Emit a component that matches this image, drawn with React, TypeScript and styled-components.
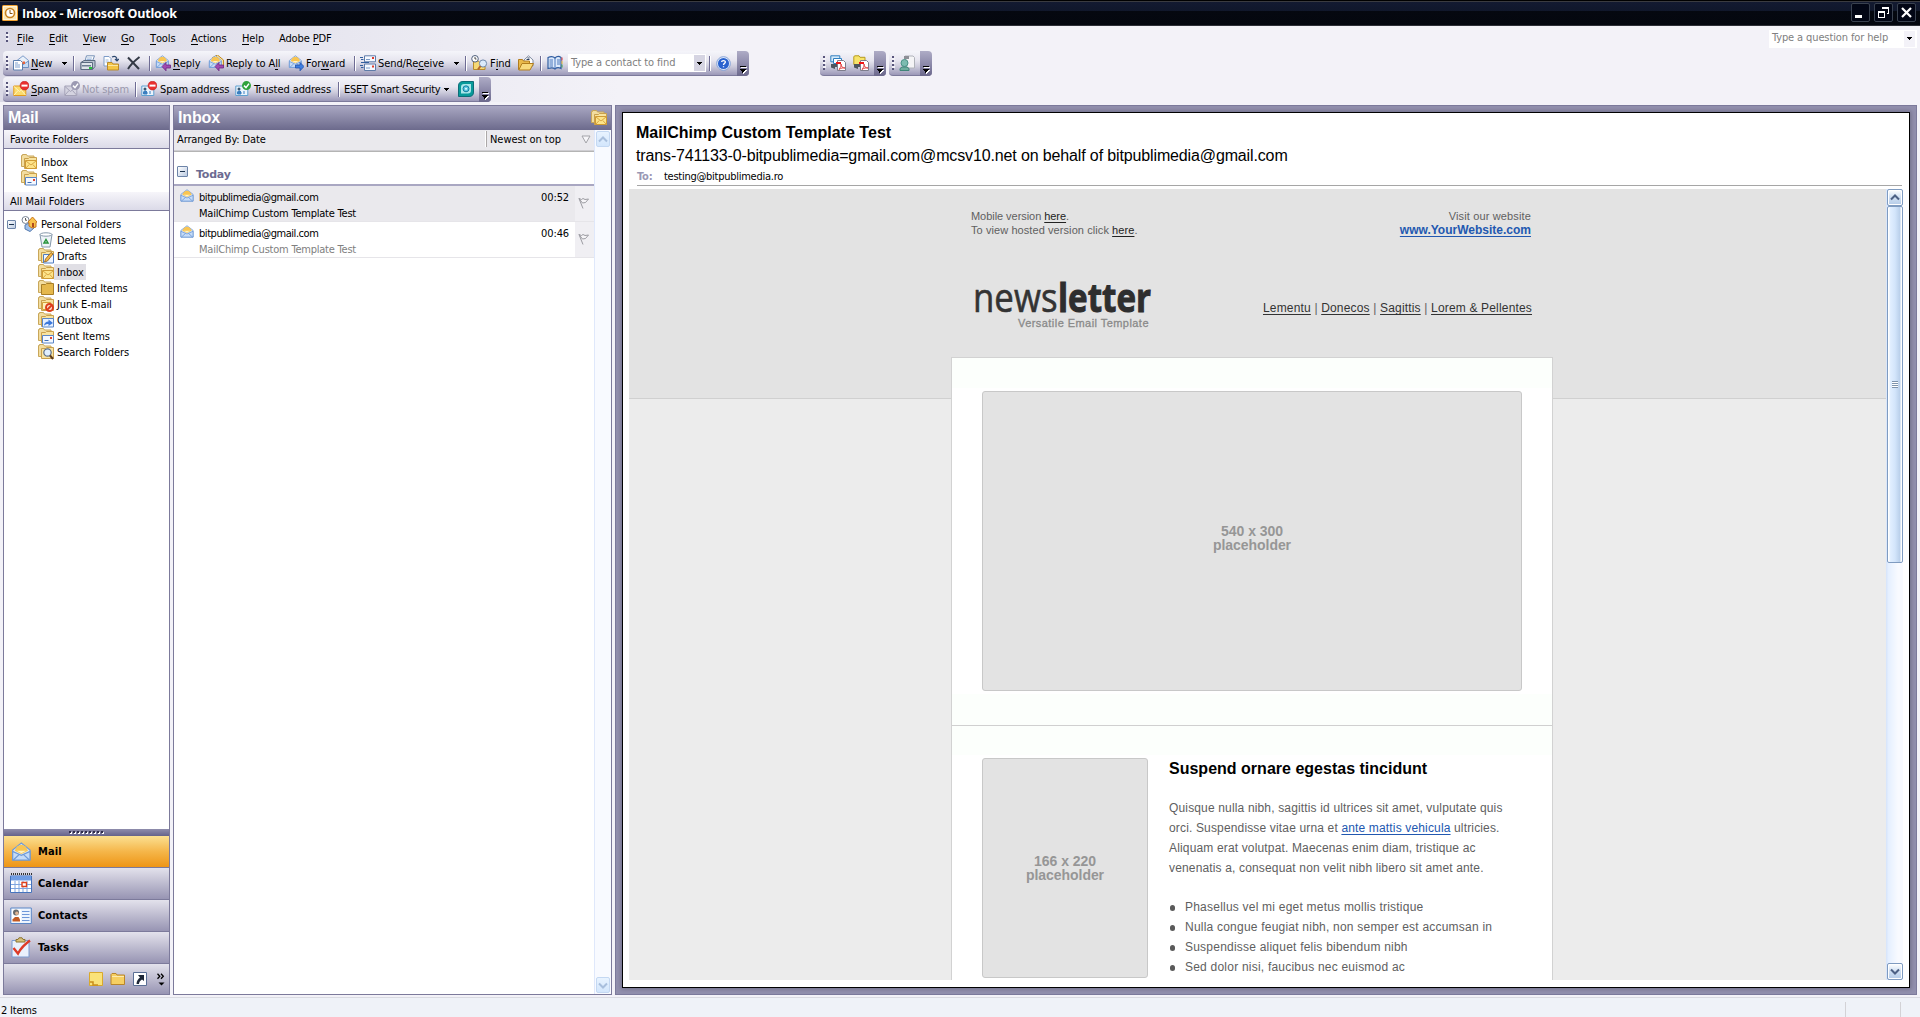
import React from 'react';
import styled, { createGlobalStyle, css } from 'styled-components';

const ui = '"DejaVu Sans Condensed", "DejaVu Sans", Tahoma, sans-serif';
const arial = '"Liberation Sans", Arial, sans-serif';
const edge = '#7c7a9b';

const Global = createGlobalStyle`
  *, *::before, *::after { box-sizing: border-box; }
  body { margin: 0; background: #f3f2f8; }
  svg { display: block; flex: none; }
  u { text-decoration: none; box-shadow: 0 1px 0 currentColor; display: inline-block; line-height: 11px; }
`;

const Window = styled.div`
  width: 1920px;
  height: 1017px;
  overflow: hidden;
  display: flex;
  flex-direction: column;
  background: #f3f2f8;
  font: 11px/14px ${ui};
  letter-spacing: -0.12px;
  color: #000;
  white-space: nowrap;
`;

/* ---------- title bar ---------- */

const TitleBar = styled.header`
  height: 26px;
  flex: none;
  display: flex;
  align-items: center;
  padding: 0 4px 0 2px;
  border-bottom: 1px solid #2e3038;
  background: linear-gradient(#000 0 1px, #3a3b40 1px 2px, #131a31 2px, #10172b 11px, #050810 11px, #04070f 100%);
`;

const Title = styled.h1`
  flex: 1;
  margin: 0 0 0 4px;
  padding-top: 2px;
  font: bold 12.5px/16px "Open Sans", sans-serif;
  letter-spacing: -0.18px;
  color: #fff;
`;

const WindowButtons = styled.div`
  display: flex;
  gap: 4px;
`;

const WindowButton = styled.button`
  width: 19px;
  height: 19px;
  padding: 0;
  display: grid;
  place-items: center;
  border: 1px solid #39414f;
  border-radius: 2px;
  background: #020615;
`;

/* ---------- menu ---------- */

const MenuBar = styled.nav`
  height: 24px;
  flex: none;
  display: flex;
  align-items: center;
  padding: 0 3px 0 6px;
  background: linear-gradient(90deg, #dad9e6, #f3f2f8 620px);
`;

const MenuItem = styled.span<{ $w: number; $gap?: number }>`
  width: ${p => p.$w}px;
  padding-top: 2px;
  margin-left: ${p => p.$gap ?? 16}px;
`;

const Grip = styled.i<{ $rows?: number }>`
  width: 3px;
  height: ${p => (p.$rows ?? 4) * 4 - 2}px;
  flex: none;
  background:
    repeating-linear-gradient(transparent 0 2px, #f3f2f8 2px 4px),
    linear-gradient(90deg, #56547a 2px, transparent 2px);
  ${p => p.$rows === 3 && css`margin-top: -2px;`}
`;

const HelpBox = styled.div`
  margin: 1px 0 0 auto;
  width: 148px;
  height: 18px;
  padding: 0 2px 0 3px;
  display: flex;
  align-items: center;
  justify-content: space-between;
  background: #fff;
  color: #808080;
  > span:first-child { padding-bottom: 2px; }
`;

const DropButton = styled.span<{ $tone?: string; $h?: number }>`
  width: 11px;
  height: ${p => p.$h ?? 16}px;
  display: grid;
  place-items: center;
  background: ${p => p.$tone ?? '#f3f2f8'};
`;

/* ---------- toolbars ---------- */

const ToolRow = styled.div`
  height: 26px;
  flex: none;
  display: flex;
  padding: 1px 0 0 3px;
  background: linear-gradient(90deg, #dad9e6, #f3f2f8 620px);
`;

const Toolbar = styled.div<{ $w: number; $gap?: number }>`
  width: ${p => p.$w}px;
  height: 25px;
  margin-left: ${p => p.$gap ?? 0}px;
  display: flex;
  align-items: center;
  padding-left: 3px;
  border-radius: 4px;
  border-bottom: 1px solid ${edge};
  background: linear-gradient(#f5f5fa, #e6e5ef 40%, #cbcadb 65%, #9b98b8);
`;

const Tool = styled.span<{ $gap?: number; $w?: number; $ls?: number; $off?: boolean }>`
  width: ${p => (p.$w ? p.$w + 'px' : 'auto')};
  margin-left: ${p => p.$gap ?? 0}px;
  padding-top: ${p => (p.$w ? 2 : 0)}px;
  letter-spacing: ${p => p.$ls ?? -0.08}px;
  color: ${p => (p.$off ? '#9a98ac' : '#000')};
  flex: none;
`;

const Divider = styled.i<{ $gap?: number }>`
  width: 2px;
  height: 15px;
  flex: none;
  margin-left: ${p => p.$gap ?? 0}px;
  background: linear-gradient(90deg, #6e6c94 1px, #fff 1px);
`;

const ContactBox = styled.div`
  width: 138px;
  height: 18px;
  margin-left: 5px;
  padding: 0 1px 0 3px;
  display: flex;
  align-items: center;
  justify-content: space-between;
  background: #fff;
  color: #808080;
`;

const OverflowCap = styled.span`
  width: 12px;
  height: 25px;
  margin: 0 0 -1px auto;
  display: flex;
  align-items: flex-end;
  justify-content: center;
  padding-bottom: 2px;
  border-radius: 0 4px 4px 0;
  background: linear-gradient(#aeacc6, #8e8bab 50%, #6b688c);
`;

/* ---------- panes ---------- */

const Workspace = styled.main`
  flex: 1;
  min-height: 0;
  display: flex;
  gap: 3px;
  padding: 3px 3px 0;
`;

const Pane = styled.section<{ $w: number }>`
  width: ${p => p.$w}px;
  flex: none;
  display: flex;
  flex-direction: column;
  border: 1px solid ${edge};
  background: #fff;
`;

const PaneHeader = styled.h2`
  height: 24px;
  flex: none;
  margin: 0;
  padding: 0 4px;
  display: flex;
  align-items: center;
  justify-content: space-between;
  background: linear-gradient(#a9a7c2, #6c6a8c);
  font: bold 16px/22px ${arial};
  letter-spacing: -0.15px;
  color: #fff;
`;

const FolderHeader = styled.h3`
  height: 19px;
  flex: none;
  margin: 0;
  padding-left: 6px;
  font: inherit;
  letter-spacing: 0;
  line-height: 20px;
  border-bottom: 1px solid ${edge};
  background: linear-gradient(#f6f5fa, #dbdae8);
`;

const FolderList = styled.ul<{ $fill?: boolean }>`
  list-style: none;
  margin: 0;
  padding: ${p => (p.$fill ? '5px 0 0 3px' : '5px 0 6px 17px')};
  flex: ${p => (p.$fill ? 1 : 'none')};
`;

const FolderItem = styled.li<{ $child?: boolean; $on?: boolean }>`
  height: 16px;
  padding-left: ${p => (p.$child ? 31 : 0)}px;
  display: flex;
  align-items: center;
  letter-spacing: -0.05px;
  span {
    height: 16px;
    line-height: 17px;
    margin-left: ${p => (p.$child ? 0 : 1)}px;
    padding: 0 2px 0 3px;
    background: ${p => (p.$on ? '#e0dfe5' : 'none')};
  }
`;

const Expander = styled.i<{ $size?: number; $gap?: number }>`
  width: ${p => p.$size ?? 9}px;
  height: ${p => p.$size ?? 9}px;
  flex: none;
  margin-right: ${p => p.$gap ?? 0}px;
  border: 1px solid #6d84a8;
  border-radius: 1px;
  background:
    linear-gradient(#1d3450, #1d3450) center / 5px 1px no-repeat,
    linear-gradient(135deg, #fff, #bccbe2);
`;

const Splitter = styled.div`
  height: 7px;
  flex: none;
  display: flex;
  justify-content: center;
  align-items: center;
  background: linear-gradient(#8f8dac, #65638a);
`;

const BigButton = styled.button<{ $on?: boolean }>`
  height: 32px;
  flex: none;
  display: flex;
  align-items: center;
  gap: 6px;
  padding: 0 0 0 6px;
  border: 0;
  border-bottom: 1px solid ${edge};
  font: bold 11px/14px ${ui};
  letter-spacing: 0.1px;
  text-align: left;
  color: #000;
  background: ${p => (p.$on ? 'linear-gradient(#fbe091, #f5b64a 50%, #ee9515)' : 'linear-gradient(#e3e2ec, #c1bfd2 45%, #9794b3)')};
`;

const ShortcutBar = styled.div`
  height: 30px;
  flex: none;
  display: flex;
  align-items: center;
  justify-content: flex-end;
  gap: 7px;
  padding-right: 4px;
  background: linear-gradient(#e3e2ec, #c1bfd2 45%, #9794b3);
  svg:last-child { margin-left: 3px; }
`;

/* ---------- message list ---------- */

const ListBody = styled.div`
  flex: 1;
  display: flex;
`;

const Messages = styled.div`
  width: 420px;
`;

const Arrange = styled.div`
  height: 22px;
  display: flex;
  align-items: center;
  padding: 0 2px 3px 3px;
  border-bottom: 1px solid #b4b4b4;
  box-shadow: inset 0 -1px 0 #cfced2;
  background: #eae9ed;
  span { padding-top: 2px; }
  em {
    width: 87px;
    margin-left: auto;
    padding-left: 3px;
    line-height: 17px;
    height: 16px;
    font-style: normal;
    border-left: 1px solid #aca8a8;
    box-shadow: -1px 0 0 #fff;
    letter-spacing: -0.05px;
  }
`;

const GroupHeader = styled.div`
  height: 34px;
  display: flex;
  align-items: flex-end;
  padding: 0 0 2px 3px;
  border-bottom: 2px solid #a9a7c2;
  font: bold 11px/14px "DejaVu Sans", sans-serif;
  letter-spacing: -0.2px;
  color: #6c6a92;
  i { margin-bottom: 5px; }
  span { margin-left: 8px; }
`;

const Message = styled.article<{ $on?: boolean }>`
  height: 36px;
  display: flex;
  border-bottom: 1px solid #e6e5e9;
  background: ${p => (p.$on ? '#eae9ed' : '#fff')};
`;

const MessageText = styled.div<{ $muted?: boolean }>`
  flex: 1;
  display: grid;
  grid-template-columns: 341px 1fr;
  grid-template-rows: 16px 16px;
  padding: 3px 0 0 6px;
  line-height: 17px;
  margin-right: 6px;
  p { margin: 0; }
  p:first-of-type { letter-spacing: -0.45px; }
  p:last-of-type { grid-row: 2; letter-spacing: -0.22px; color: ${p => (p.$muted ? '#808080' : '#000')}; }
  time { text-align: right; }
`;

const MessageIcon = styled.div`
  width: 19px;
  padding: 3px 0 0 6px;
`;

const FlagCell = styled.div`
  width: 19px;
  padding: 11px 0 0 3px;
  background: #f0eff3;
`;

const PaleScroll = styled.div`
  flex: 1;
  display: flex;
  flex-direction: column;
  justify-content: space-between;
  align-items: center;
  padding: 1px 0 1px;
  border-left: 1px solid #dfe8fb;
  background: #f8faff;
`;

const PaleArrow = styled.span`
  width: 14px;
  height: 16px;
  display: grid;
  place-items: center;
  border: 1px solid #c4d8f2;
  border-radius: 2px;
  background: linear-gradient(#e8f3ff, #d3e6fc);
`;

/* ---------- reading pane ---------- */

const ReadingFrame = styled.section`
  flex: 1;
  display: flex;
  padding: 6px;
  border: 1px solid ${edge};
  background: #918fad;
`;

const Reading = styled.div`
  flex: 1;
  min-width: 0;
  display: flex;
  flex-direction: column;
  border: 1px solid #000;
  background: #fff;
  padding: 0 6px 7px;
  box-shadow: 0 0 4px 1px #706e88;
`;

const MailHead = styled.header`
  height: 76px;
  flex: none;
  padding: 11px 1px 0 7px;
  font-family: ${arial};
  h3 { margin: 0; font: bold 16px/18px ${arial}; letter-spacing: 0.02px; }
  p { margin: 5px 0 0; font: 16px/18px ${arial}; letter-spacing: -0.135px; }
`;

const ToLine = styled.div`
  margin: 6px 0 0 1px;
  height: 15px;
  border-bottom: 1px solid #a6a6a6;
  font: 11px/11px ${ui};
  letter-spacing: -0.264px;
  b { display: inline-block; width: 27px; color: #9a98b5; font: bold 11px/11px ${ui}; letter-spacing: -0.2px; }
`;

const MailBody = styled.div`
  flex: 1;
  min-height: 0;
  display: flex;
`;

const MailCanvas = styled.div`
  width: 1257px;
  overflow: hidden;
  background: linear-gradient(#e3e3e3 209px, #d0d0d0 209px 210px, #ececec 210px);
  font: 12px/20px ${arial};
  color: #606060;
`;

const MailColumn = styled.div`
  width: 602px;
  margin-left: 322px;
`;

const TopLinks = styled.div`
  height: 91px;
  padding: 20px 22px 0 20px;
  display: flex;
  justify-content: space-between;
  font: 11px/14px ${arial};
  letter-spacing: 0.08px;
  div:last-child { text-align: right; letter-spacing: 0.14px; }
  a { color: #222; text-decoration: underline; text-underline-offset: 2px; }
  a.site { font: bold 12px/14px ${arial}; letter-spacing: 0; color: #2258b0; }
`;

const Tight = styled.span`
  letter-spacing: -0.05px;
`;

const Brand = styled.div`
  height: 77px;
  padding: 0 21px 0 22px;
  display: flex;
  justify-content: space-between;
  nav { padding-top: 18px; letter-spacing: 0.17px; }
  nav a { color: #333; text-decoration: underline; text-underline-offset: 2px; }
`;

const Card = styled.div`
  border: 1px solid #d2d2d2;
  border-bottom: 0;
  background: #fff;
  height: 700px;
`;

const Hero = styled.div`
  height: 368px;
  padding: 33px 30px 0;
  border-bottom: 1px solid #d0d0d0;
  background: linear-gradient(#fcfffc 30px, #fff 30px 336px, #fcfffc 336px);
`;

const Feature = styled.div`
  display: flex;
  padding: 32px 30px 0;
  background: linear-gradient(#fcfffc 29px, #fff 29px);
`;

const Placeholder = styled.div<{ $w: number; $h: number; $lift?: number }>`
  width: ${p => p.$w}px;
  height: ${p => p.$h}px;
  flex: none;
  display: grid;
  place-content: center;
  padding-bottom: ${p => p.$lift ?? 0}px;
  border: 1px solid #c8c8c8;
  border-radius: 3px;
  background: #e3e3e3;
  font: bold 14px/14px ${arial};
  letter-spacing: -0.05px;
  text-align: center;
  color: #969696;
`;

const Article = styled.div`
  margin-left: 21px;
  letter-spacing: 0.155px;
  h4 { margin: 1px 0 19px; font: bold 16px/20px ${arial}; letter-spacing: 0.01px; color: #000; }
  p { margin: 0 0 19px; }
  a { color: #2258b0; text-decoration: underline; text-underline-offset: 2px; }
  ul { list-style: none; margin: 0; padding: 0; letter-spacing: 0.22px; }
  li { display: flex; align-items: center; height: 20px; }
  li::before { content: ''; width: 5px; height: 6px; margin: 1px 10px 0 1px; border-radius: 3px; background: #5a5a5a; }
`;

const Scroll = styled.div`
  width: 17px;
  display: flex;
  flex-direction: column;
  padding-left: 1px;
  background: linear-gradient(90deg, #d9e6fb 1px, #e4efff 2px, #f8faff 12px);
`;

const ScrollArrow = styled.span<{ $end?: boolean }>`
  width: 16px;
  height: 17px;
  flex: none;
  margin-top: ${p => (p.$end ? 'auto' : '0')};
  display: grid;
  place-items: center;
  border: 1px solid #7f9bc0;
  border-radius: 2px;
  background: linear-gradient(#fff, #d3e2f4 45%, #b4cbe8);
  box-shadow: inset 0 0 0 1px #fff;
`;

const Thumb = styled.span`
  width: 16px;
  height: 357px;
  flex: none;
  display: grid;
  place-items: center;
  border: 1px solid #7f9bc0;
  border-radius: 2px;
  background: linear-gradient(90deg, #fff 1px, #e2efff 2px, #d3e5fb 7px, #b9cfea 12px, #fff 13px);
  &::before {
    content: '';
    width: 6px;
    height: 7px;
    margin-top: -1px;
    background: repeating-linear-gradient(#7d93ad 0 1px, #fff 1px 2px);
  }
`;

const StatusBar = styled.footer`
  height: 22px;
  flex: none;
  display: flex;
  align-items: stretch;
  padding: 5px 0 0 1px;
  background: linear-gradient(#f3f2f8 2px, #dadbe2 2px 3px, #eff2f8 3px);
  letter-spacing: -0.2px;
  line-height: 22px;
  span { margin-bottom: -4px; }
  i { width: 1px; margin: 2px 0 0; background: #d3d2d6; }
  i:first-of-type { margin-left: auto; }
  i:last-of-type { margin: 2px 19px 0 54px; }
`;

/* ---------- icons ---------- */

const Caret = ({ w = 5 }: { w?: number }) => (
  <svg width={w} height="3" viewBox="0 0 5 3" shapeRendering="crispEdges"><path d="M0 0h5v1H4v1H3v1H2V2H1V1H0z" /></svg>
);

const More = () => (
  <svg width="7" height="8" viewBox="0 0 7 8" shapeRendering="crispEdges">
    <path fill="#fff" d="M1 1h6v1H1zM2 4h5v1H6v1H5v1H4v1H3z" />
    <path d="M0 0h6v1H0zM0 3h6v1H5v1H4v1H3v1H2V5H1V4H0z" />
  </svg>
);

const SplitterDots = () => (
  <svg width="36" height="3" viewBox="0 0 36 3" shapeRendering="crispEdges">
    {Array.from({ length: 9 }, (_, i) => (
      <React.Fragment key={i}>
        <path d={`M${i * 4 + 1} 1h2v2h-2z`} fill="#fff" />
        <path d={`M${i * 4} 0h2v2h-2z`} fill="#2f2d4a" />
      </React.Fragment>
    ))}
  </svg>
);

type Kids = { children: React.ReactNode; size?: number };
const Glyph = ({ children, size = 16 }: Kids) => <svg width={size} height={size} viewBox="0 0 16 16">{children}</svg>;

const OpenEnvelope = () => (
  <>
    <path d="M1.500 6 8 .8 14.500 6v7.500h-13z" fill="#dbe9fb" stroke="#6f9ad6" strokeWidth=".9" />
    <path d="M3 6.500C4 3.500 6 2 8 2s4 1.500 5 4.500L8 9z" fill="#f9c552" />
    <path d="M4.500 6.500h7L8 8.500z" fill="#fff3c4" />
    <path d="M1.500 7v6.500h13V7L8 10z" fill="#c6dcf8" stroke="#6f9ad6" strokeWidth=".9" />
    <path d="m2 13.500 4.500-4.200M14 13.500 9.500 9.300" stroke="#6f9ad6" strokeWidth=".9" fill="none" />
  </>
);

/* tan folder with a bright front that the per-folder badge sits on */
const Folder = ({ flat }: { flat?: boolean }) => (
  <>
    <path d="M.5 12.500v-11h1v-1h4l1 1.500h6.500v10.500z" fill="#f2dda0" stroke="#c9a75a" />
    <path d="M3.500 14.500v-10h4l1-1h7v11z" fill={flat ? '#e5b84c' : '#f8e3a0'} stroke={flat ? '#a87f28' : '#c9a04c'} />
  </>
);

const BadgeStop = ({ x, y }: { x: number; y: number }) => (
  <>
    <circle cx={x} cy={y} r="4.400" fill="#ea2f2f" stroke="#c01a1a" strokeWidth=".6" />
    <path d={`M${x - 3} ${y - 1}h6v2h-6z`} fill="#fff" />
  </>
);

const BadgeTick = ({ x, y, c }: { x: number; y: number; c: string }) => (
  <>
    <circle cx={x} cy={y} r="4.500" fill={c} />
    <path d={`m${x - 2.5} ${y}l2 2 3-4`} fill="none" stroke="#fff" strokeWidth="1.500" />
  </>
);

const IconApp = () => (
  <Glyph>
    <rect width="16" height="16" rx="1.500" fill="#f0a233" />
    <rect x="1.500" y="1.500" width="13" height="13" fill="#fce6b4" stroke="#fff4d6" />
    <circle cx="8" cy="8" r="4.500" fill="#fff" stroke="#c98322" strokeWidth="1.600" />
    <path d="M8 5v3.500h2.500" fill="none" stroke="#8a5412" />
  </Glyph>
);
const IconNew = () => (
  <Glyph>
    <path d="M4 5.500 10 .8l5.500 4.700V12H4z" fill="#e8f0fa" stroke="#7d9cc8" />
    <path d="M4 6l5.500 4L15.500 6v6.500H4z" fill="#c7dbf5" stroke="#6e90c0" />
    <path d="M.5 5.500h7l2 2v7.500h-9z" fill="#fff" stroke="#5d7fae" />
    <path d="M2 10h5M2 12h5M2 8h3" stroke="#7ea0cf" />
    <path d="M9.500 6.500h2.500v2.500h-2.500z" fill="#e8643c" />
  </Glyph>
);
const IconPrint = () => (
  <Glyph>
    <path d="M5 6 6.500.800h8L12.500 6z" fill="#fff" stroke="#7590b5" />
    <path d="M7 3h5M6.500 4.500h5" stroke="#86a7d4" strokeWidth=".8" />
    <path d="M1 7.500 4 5.500h11v6L12.500 14.500H1z" fill="#b9c3d0" stroke="#5c6b80" />
    <path d="M1 7.500h11.500v7H1z" fill="#dfe4ea" stroke="#5c6b80" />
    <path d="M2 10h9v1.500H2z" fill="#6d7c90" />
    <path d="M9 12h3v2H9z" fill="#27c13a" />
  </Glyph>
);
const IconMove = () => (
  <Glyph>
    <path d="M1 1.500h5l2 2V11H1z" fill="#fff" stroke="#7d9cc8" />
    <path d="M2.500 5h3M2.500 7h4" stroke="#9db8de" />
    <path d="M9 2c3-1.500 5 0 5 3M12 4l2 2 2-2" fill="none" stroke="#2b476e" strokeWidth="1.200" />
    <path d="M4.500 15V7.500H9l1 1.500h5.500v6z" fill="#f4c547" stroke="#b88a2c" />
    <path d="M5 10.500h10" stroke="#fbe7a4" />
  </Glyph>
);
const IconDelete = () => (
  <Glyph>
    <path d="M2 2.500 13 14M13.500 2C9 5.500 5 9 2 14" fill="none" stroke="#333945" strokeWidth="2" />
  </Glyph>
);
const IconReply = ({ all }: { all?: boolean }) => (
  <Glyph>
    {all && <path d="M4 3 9.500 0 15.500 5v6" fill="#fbe29a" stroke="#c08a26" />}
    <g transform="scale(.92)"><OpenEnvelope /></g>
    <path d="m7 11.500 4-4V10h4.500v3H11v2.800z" fill="#a04bb0" stroke="#6b2480" strokeWidth=".8" />
  </Glyph>
);
const IconForward = () => (
  <Glyph>
    <g transform="scale(.92)"><OpenEnvelope /></g>
    <path d="m16 11.500-4-4V10H7.500v3H12v2.800z" fill="#3f7fe0" stroke="#1f4fa8" strokeWidth=".8" />
  </Glyph>
);
const IconSendReceive = () => (
  <Glyph>
    <path d="M4.500.8h11v6h-11zM4.500 9h11v6.500h-11z" fill="#f5f9ff" stroke="#5e7ba8" />
    <path d="M12 2h2v2h-2zM12 10.500h2v2h-2z" fill="#dd3c2c" />
    <path d="M6 4.500h4M6 13h4" stroke="#7d9cc8" />
    <path d="M0 2.500h3M1 4.500h2.500M0 10.500h3M1 12.500h2.500M1 7.500h8" stroke="#33609f" />
  </Glyph>
);
const IconFind = () => (
  <svg width="17" height="16" viewBox="0 0 17 16">
    <path d="M2.500 14.500V6h5l1 1.500H14v7z" fill="#f6d876" stroke="#b88a2c" />
    <circle cx="4" cy="3.800" r="3.300" fill="#fff" stroke="#50607c" />
    <path d="M4 2v2h1.500" fill="none" stroke="#222" strokeWidth=".8" />
    <circle cx="12" cy="8.500" r="3.600" fill="#dbeafb" stroke="#7089ab" />
    <path d="m9.500 11-2.500 3.500" stroke="#b4652b" strokeWidth="2" />
  </svg>
);
const IconOpenFolder = () => (
  <Glyph>
    <path d="M6 5 10.500.8 15 5v6H6z" fill="#fff" stroke="#7e8ba0" />
    <path d="M8.500 4.500h3M9.500 3h2" stroke="#2c3f60" />
    <path d="M.5 14.500V4.500h4l1 1.500h6v8z" fill="#e9b94a" stroke="#b27d1e" />
    <path d="M.8 15 4 8.500h11.500L12 15z" fill="#f8da7d" stroke="#b27d1e" />
  </Glyph>
);
const IconBook = () => (
  <Glyph>
    <path d="M1 2.500C4 1 6.500 1.500 8 3c1.500-1.500 4-2 6-.5v11c-2-1-4.500-1-6 .5-1.500-1.500-4-1.500-7-.5z" fill="#dce9fb" stroke="#305da0" strokeWidth="1.200" />
    <path d="M8 3v11M2.500 5H6M2.500 7H6M2.500 9H6M2.500 11H6M10 5h3M10 7h3M10 9h3" stroke="#3b6cb5" strokeWidth=".9" />
    <path d="M14.500 2.500h1v3h-1z" fill="#d33" /><path d="M14.500 6h1v3h-1z" fill="#eab52e" /><path d="M14.500 9.500h1v3h-1z" fill="#3a9c48" />
  </Glyph>
);
const IconHelp = () => (
  <Glyph size={15}>
    <circle cx="8" cy="8" r="7.300" fill="#e6eefb" stroke="#7f9fd6" />
    <circle cx="8" cy="8" r="5.900" fill="#2a63cf" />
    <path d="M6 6.500C6 4.500 10 4.300 10 6.500 10 8 8 7.800 8 9.500M8 10.800v1.200" fill="none" stroke="#fff" strokeWidth="1.400" />
  </Glyph>
);
const IconSpam = ({ off }: { off?: boolean }) => (
  <Glyph>
    <path d="M.8 5h12v9.500H.8z" fill={off ? '#d4d3e0' : '#fbdc6c'} stroke={off ? '#a5a3b8' : '#e39a1c'} />
    <path d="m1 5.500 5.500 5 6-5M1 14l4-4.500M12.500 14l-4-4.500" fill="none" stroke={off ? '#a5a3b8' : '#fff3c0'} />
    {off ? <BadgeTick x={11.5} y={4.6} c="#9b99b2" /> : <BadgeStop x={11.5} y={4.6} />}
  </Glyph>
);
const IconAddress = ({ ok }: { ok?: boolean }) => (
  <Glyph>
    <path d="M.8 5h12v9.500H.8z" fill="#eaf4fd" stroke="#5fa0d0" />
    <circle cx="4" cy="8" r="1.500" fill="#3b5770" />
    <path d="M2.500 13V11l1-1h1.500l1 1v2zM9 10v3" fill="#3b7fc0" stroke="#3b7fc0" />
    {ok ? <BadgeTick x={11.5} y={4.6} c="#2ea23a" /> : <BadgeStop x={11.5} y={4.6} />}
  </Glyph>
);
const IconEset = () => (
  <Glyph>
    <path d="M.5 15.500V5Q.5.5 5 .5h10.500v10.500q0 4.500-4.500 4.500z" fill="#079a9a" stroke="#0d6d78" />
    <path d="M3 12.500V6Q3 3 6 3h7v6.500q0 3-3 3z" fill="#a9e6ea" />
    <circle cx="8" cy="7.800" r="3" fill="#5ac6e0" stroke="#127c9c" />
    <circle cx="8" cy="7.800" r="1" fill="#e9fbff" />
  </Glyph>
);
const PdfSheet = () => (
  <>
    <path d="M7.500 5.500h6l2 2v8h-8z" fill="#fff" stroke="#7d7d8c" />
    <path d="M6 7h5v2H6z" fill="#f01414" />
    <path d="M9 14.500C11 12 11.500 10 11 9c0 3 2 4 4 4-2-.5-4 0-6 1.500z" fill="none" stroke="#e04545" />
  </>
);
const IconPdfMail = ({ folder }: { folder?: boolean }) => (
  <Glyph>
    {folder
      ? <path d="M.8 9.500V1.500L2 .8h4l1 1.500h5V9.500z" fill="#f7e46a" stroke="#b79c20" />
      : <><path d="M.8.800h9v6h-9z" fill="#d6ebfb" stroke="#2f7fc0" /><path d="M3.500 3.500h8v5h-8z" fill="#fff" stroke="#2f7fc0" /></>}
    <path d="M1 9v3.500l4 1.500v-2h2V9z" fill="#4d555e" />
    <PdfSheet />
  </Glyph>
);
const IconMeeting = () => (
  <Glyph>
    <path d="M6 1h8l1.500 1.500V13H8z" fill="#f4f4f6" stroke="#b0b3ba" />
    <path d="M5 1h5v3H5z" fill="#8d8f96" />
    <circle cx="5.500" cy="8" r="3.500" fill="#7cbcb0" stroke="#4a9287" />
    <path d="M1 15.500v-2l2-1.500h5l2 1.500v2z" fill="#6fae9f" stroke="#3f8478" />
  </Glyph>
);

const IconFolder = () => <Glyph><Folder flat /></Glyph>;
const IconInbox = () => (
  <Glyph>
    <Folder />
    <path d="M4.500 6.500h11v8h-11z" fill="#fde48a" stroke="#cf9a34" />
    <path d="m5 7 5 4 5-4M5 14l3.200-3.500M15 14l-3.200-3.500" fill="none" stroke="#d9a845" />
  </Glyph>
);
const IconSent = () => (
  <Glyph>
    <Folder />
    <path d="M4.500 7.500h11v7.500h-11z" fill="#f3f8ff" stroke="#5b86c6" />
    <path d="M12 9h2v2h-2z" fill="#e2442e" /><path d="M6.500 12.500h4" stroke="#3b6cb5" />
  </Glyph>
);
const IconDrafts = () => (
  <Glyph>
    <Folder />
    <path d="M5.500 6.500h10v8.500h-10z" fill="#eef5ff" stroke="#4f7cc0" />
    <path d="m6.500 14 1-3L13 4.500l2 1.500-5.500 7z" fill="#f6b742" stroke="#8a5a1c" strokeWidth=".8" />
  </Glyph>
);
const IconJunk = () => (
  <Glyph>
    <Folder />
    <path d="M4.500 6.500h8v7h-8z" fill="#fdf0bd" stroke="#d3a13a" />
    <circle cx="11.500" cy="11.500" r="3.500" fill="#fbd7c8" stroke="#dd3d1c" strokeWidth="1.900" />
    <path d="m9 14 5-5" stroke="#dd3d1c" strokeWidth="1.800" />
  </Glyph>
);
const IconOutbox = () => (
  <Glyph>
    <Folder />
    <path d="M4.500 6.500h11v8.500h-11z" fill="#e6f0ff" stroke="#5b86c6" />
    <path d="M6 14c0-3 2-4.500 4.500-4.500V7.500L15 11l-4.500 3v-2C8.500 12 7 12.500 6 14z" fill="#3c78dc" />
  </Glyph>
);
const IconSearchFolder = () => (
  <Glyph>
    <Folder />
    <circle cx="9.500" cy="8.500" r="3.700" fill="#e1effd" stroke="#5d7089" strokeWidth="1.200" />
    <path d="m12 11.500 3 3.500" stroke="#5a3a1c" strokeWidth="2" />
  </Glyph>
);
const IconTrash = () => (
  <Glyph>
    <path d="M2 2.500h12l-2 12.500H4z" fill="#eef4f8" stroke="#8598aa" />
    <ellipse cx="8" cy="2.500" rx="6" ry="1.700" fill="#fff" stroke="#8598aa" />
    <path d="M8 7.500 10 11H6z" fill="none" stroke="#27923a" strokeWidth="1.500" />
  </Glyph>
);
const IconPersonal = () => (
  <Glyph>
    <path d="m4 9 6-3 3 3v3l-4 3.500L4 13z" fill="#9fc0ea" stroke="#5479ac" />
    <circle cx="4.500" cy="4" r="3.500" fill="#fff" stroke="#7a8494" />
    <path d="M4.500 2v2.300H6" fill="none" stroke="#333" strokeWidth=".8" />
    <path d="M7 6 11.500 1 16 6l-1 .5V11l-4 1-3-2V6.500z" fill="#f9c24a" stroke="#c8761c" />
    <path d="M11 7h2v4h-2z" fill="#b04a1c" />
  </Glyph>
);

const IconBigMail = () => <svg width="22" height="22" viewBox="-.5 0 16.500 15"><OpenEnvelope /></svg>;
const IconBigCalendar = () => (
  <svg width="22" height="22" viewBox="0 0 22 22">
    <path d="M.5 3h21v16.500H.5z" fill="#fff" stroke="#4674bd" />
    <path d="M1 3h20v4.500H1z" fill="#6f9ce4" />
    <path d="M1 1h21" stroke="#333" strokeWidth="2" strokeDasharray="1 1" />
    <path d="M1 11.500h20M1 15.500h20M5 8v11M9 8v11M13 8v11M17 8v11" stroke="#7fa5e0" />
    <path d="M12 9.500h4.500v4H12z" fill="#fff" stroke="#e0401c" strokeWidth="1.400" />
  </svg>
);
const IconBigContacts = () => (
  <svg width="22" height="22" viewBox="0 0 22 22">
    <path d="M.8 3h20.500v15.500H.8z" fill="#edf4fe" stroke="#5b86c6" />
    <path d="M2 4.500h9V17H2z" fill="#fff" />
    <circle cx="6" cy="7.500" r="3" fill="#6a6a6a" /><circle cx="6.800" cy="8.300" r="1.700" fill="#e2b592" />
    <path d="M2.500 16.500v-2L5 12h3.500l1.500 2.500v2z" fill="#c45a22" />
    <path d="M12 6.500h7.500M12 9.500h7.500M12 12.500h7.500M12 15.500h7.500" stroke="#6f97d8" />
  </svg>
);
const IconBigTasks = () => (
  <svg width="22" height="22" viewBox="0 0 22 22">
    <path d="M2 3.500h17V20H2z" fill="#e9f1fd" stroke="#7c9bd0" />
    <path d="M6 5V2.500h2L9 .8h3l1 1.700h2V5z" fill="#d9c27c" stroke="#8a7430" />
    <path d="m3.500 11 4.500 5.500C11 11 15 7 20 3.500" fill="none" stroke="#dd3b28" strokeWidth="2.400" />
  </svg>
);
const IconNote = () => (
  <svg width="14" height="14" viewBox="0 0 14 14"><path d="M.5.5h13v13h-13z" fill="#fae279" stroke="#d9a92c" /><path d="M1 10h3v3h5" fill="none" stroke="#c98d1a" strokeWidth="1.500" /></svg>
);
const IconBarFolder = () => (
  <svg width="16" height="14" viewBox="0 0 16 14"><path d="M1 12.500v-10L2 1.500h4l1 1.500h7.500v9.500z" fill="#f6cf62" stroke="#b9852a" /><path d="M2 4.500h12" stroke="#fdebb0" /></svg>
);
const IconShortcut = () => (
  <svg width="14" height="14" viewBox="0 0 14 14"><path d="M.5.5h13v13h-13z" fill="#fff" stroke="#5b6f95" /><path d="M5 3h6v6L9 7.500C7 9 6 10 6 12H3.500c0-3 1.500-5 3.500-6.500z" fill="#1d2636" /></svg>
);
const IconChevrons = () => (
  <svg width="8" height="13" viewBox="0 0 8 13"><path d="m.5.8 2.300 2.500L.5 5.800M4 .8l2.300 2.500L4 5.800" fill="none" stroke="#000" strokeWidth="1.300" /><path d="M1.500 9.500h6l-3 3z" /></svg>
);

const IconMessage = () => <svg width="14" height="13" viewBox="0.500 0 15 14.500" preserveAspectRatio="none"><OpenEnvelope /></svg>;
const IconFlag = () => (
  <svg width="12" height="12" viewBox="0 0 12 12"><path d="M1 1.500 3.500 2.500 5 1.500l2 1 3.500-.5-3 3.500-3 .5zM1 1.500 5 11.500" fill="#f6f5f8" stroke="#9c9ca2" /></svg>
);
const Chevron = ({ up, c = '#4d6185' }: { up?: boolean; c?: string }) => (
  <svg width="10" height="7" viewBox="0 0 10 7"><path d={up ? 'M1 5.500l4-4 4 4' : 'M1 1.500l4 4 4-4'} fill="none" stroke={c} strokeWidth="2" /></svg>
);
const Logo = () => (
  <svg width="182" height="56" viewBox="-2 0 182 56" overflow="visible">
    <text x="-2" y="31.500" fontFamily="Open Sans, sans-serif" fontSize="40" letterSpacing="0" fill="#333" stroke="#333" strokeWidth=".6" textLength="84.500" lengthAdjust="spacingAndGlyphs">news</text>
    <text x="83" y="31.500" fontFamily="Open Sans, sans-serif" fontSize="40" letterSpacing="0" fontWeight="700" fill="#2e2e2e" stroke="#2e2e2e" strokeWidth="1" textLength="93" lengthAdjust="spacingAndGlyphs">letter</text>
    <text x="43" y="47" fontFamily="Liberation Sans, sans-serif" fontSize="11" letterSpacing=".5" fill="#8a8a8a" stroke="#8a8a8a" strokeWidth=".3" textLength="131">Versatile Email Template</text>
  </svg>
);

/* ---------- data ---------- */

const folders: [string, () => React.JSX.Element][] = [
  ['Deleted Items', IconTrash],
  ['Drafts', IconDrafts],
  ['Inbox', IconInbox],
  ['Infected Items', IconFolder],
  ['Junk E-mail', IconJunk],
  ['Outbox', IconOutbox],
  ['Sent Items', IconSent],
  ['Search Folders', IconSearchFolder],
];

const sections: [string, () => React.JSX.Element][] = [
  ['Mail', IconBigMail],
  ['Calendar', IconBigCalendar],
  ['Contacts', IconBigContacts],
  ['Tasks', IconBigTasks],
];

const bullets = [
  'Phasellus vel mi eget metus mollis tristique',
  'Nulla congue feugiat nibh, non semper est accumsan in',
  'Suspendisse aliquet felis bibendum nibh',
  'Sed dolor nisi, faucibus nec euismod ac',
];

export default function App() {
  return (
    <Window>
      <Global />
      <TitleBar>
        <IconApp />
        <Title>Inbox - Microsoft Outlook</Title>
        <WindowButtons>
          <WindowButton><svg width="11" height="11"><path d="M0 8h7v3H0z" fill="#fff" /></svg></WindowButton>
          <WindowButton>
            <svg width="11" height="11" shapeRendering="crispEdges"><path d="M4 0h7v7H9V6h1V2H4zM0 4h7v7H0zM1 6v4h5V6z" fill="#fff" fillRule="evenodd" /></svg>
          </WindowButton>
          <WindowButton><svg width="11" height="11"><path d="m1 1 9 9M10 1l-9 9" stroke="#fff" strokeWidth="2.200" /></svg></WindowButton>
        </WindowButtons>
      </TitleBar>

      <MenuBar>
        <Grip $rows={3} />
        <MenuItem $w={16} $gap={8}><u>F</u>ile</MenuItem>
        <MenuItem $w={18}><u>E</u>dit</MenuItem>
        <MenuItem $w={22}><u>V</u>iew</MenuItem>
        <MenuItem $w={13}><u>G</u>o</MenuItem>
        <MenuItem $w={25}><u>T</u>ools</MenuItem>
        <MenuItem $w={35}><u>A</u>ctions</MenuItem>
        <MenuItem $w={21}><u>H</u>elp</MenuItem>
        <MenuItem $w={54}>Adobe <u>P</u>DF</MenuItem>
        <HelpBox><span>Type a question for help</span><DropButton><Caret /></DropButton></HelpBox>
      </MenuBar>

      <ToolRow>
        <Toolbar $w={746}>
          <Grip />
          <Tool $gap={4}><IconNew /></Tool>
          <Tool $gap={2} $w={22}><u>N</u>ew</Tool>
          <Tool $gap={9}><Caret /></Tool>
          <Divider $gap={6} />
          <Tool $gap={5}><IconPrint /></Tool>
          <Tool $gap={7}><IconMove /></Tool>
          <Tool $gap={7}><IconDelete /></Tool>
          <Divider $gap={7} />
          <Tool $gap={4}><IconReply /></Tool>
          <Tool $gap={2} $w={27}><u>R</u>eply</Tool>
          <Tool $gap={8}><IconReply all /></Tool>
          <Tool $gap={2} $w={54} $ls={-0.12}>Reply to A<u>l</u>l</Tool>
          <Tool $gap={8}><IconForward /></Tool>
          <Tool $gap={2} $w={40}>For<u>w</u>ard</Tool>
          <Divider $gap={8} />
          <Tool $gap={4}><IconSendReceive /></Tool>
          <Tool $gap={2} $w={66}>Send/Re<u>c</u>eive</Tool>
          <Tool $gap={10}><Caret /></Tool>
          <Divider $gap={6} />
          <Tool $gap={4}><IconFind /></Tool>
          <Tool $gap={2} $w={20}>F<u>i</u>nd</Tool>
          <Tool $gap={8}><IconOpenFolder /></Tool>
          <Divider $gap={6} />
          <Tool $gap={5}><IconBook /></Tool>
          <ContactBox>Type a contact to find<DropButton $tone="#d5d4e2"><Caret /></DropButton></ContactBox>
          <Divider $gap={3} />
          <Tool $gap={5}><IconHelp /></Tool>
          <OverflowCap><More /></OverflowCap>
        </Toolbar>
        <Toolbar $w={66} $gap={71}>
          <Grip />
          <Tool $gap={4}><IconPdfMail /></Tool>
          <Tool $gap={7}><IconPdfMail folder /></Tool>
          <OverflowCap><More /></OverflowCap>
        </Toolbar>
        <Toolbar $w={43} $gap={3}>
          <Grip />
          <Tool $gap={4}><IconMeeting /></Tool>
          <OverflowCap><More /></OverflowCap>
        </Toolbar>
      </ToolRow>

      <ToolRow>
        <Toolbar $w={488}>
          <Grip />
          <Tool $gap={4}><IconSpam /></Tool>
          <Tool $gap={2} $w={25}><u>S</u>pam</Tool>
          <Tool $gap={8}><IconSpam off /></Tool>
          <Tool $gap={2} $w={45} $off>Not spam</Tool>
          <Divider $gap={8} />
          <Tool $gap={4}><IconAddress /></Tool>
          <Tool $gap={3} $w={67}>Spam address</Tool>
          <Tool $gap={8}><IconAddress ok /></Tool>
          <Tool $gap={3} $w={77}>Trusted address</Tool>
          <Divider $gap={7} />
          <Tool $gap={4} $w={97} $ls={-0.28}>ESET Smart Security</Tool>
          <Tool $gap={3}><Caret /></Tool>
          <Tool $gap={9}><IconEset /></Tool>
          <OverflowCap><More /></OverflowCap>
        </Toolbar>
      </ToolRow>

      <Workspace>
        <Pane $w={167}>
          <PaneHeader>Mail</PaneHeader>
          <FolderHeader>Favorite Folders</FolderHeader>
          <FolderList>
            <FolderItem><IconInbox /><span>Inbox</span></FolderItem>
            <FolderItem><IconSent /><span>Sent Items</span></FolderItem>
          </FolderList>
          <FolderHeader>All Mail Folders</FolderHeader>
          <FolderList $fill>
            <FolderItem>
              <Expander $gap={5} /><IconPersonal /><span>Personal Folders</span>
            </FolderItem>
            {folders.map(([name, Icon], i) => (
              <FolderItem key={name} $child $on={i === 2}><Icon /><span>{name}</span></FolderItem>
            ))}
          </FolderList>
          <Splitter><SplitterDots /></Splitter>
          {sections.map(([name, Icon], i) => (
            <BigButton key={name} $on={i === 0}><Icon />{name}</BigButton>
          ))}
          <ShortcutBar><IconNote /><IconBarFolder /><IconShortcut /><IconChevrons /></ShortcutBar>
        </Pane>

        <Pane $w={439}>
          <PaneHeader>Inbox<IconInbox /></PaneHeader>
          <ListBody>
            <Messages>
              <Arrange>
                <span>Arranged By: Date</span>
                <em>Newest on top</em>
                <svg width="19" height="9"><path d="M9 1h8l-4 7z" fill="#f6f5f8" stroke="#a3a3a8" /></svg>
              </Arrange>
              <GroupHeader><Expander $size={11} /><span>Today</span></GroupHeader>
              {['00:52', '00:46'].map((t, i) => (
                <Message key={t} $on={i === 0}>
                  <MessageIcon><IconMessage /></MessageIcon>
                  <MessageText $muted={i === 1}>
                    <p>bitpublimedia@gmail.com</p>
                    <time>{t}</time>
                    <p>MailChimp Custom Template Test</p>
                  </MessageText>
                  <FlagCell><IconFlag /></FlagCell>
                </Message>
              ))}
            </Messages>
            <PaleScroll>
              <PaleArrow><Chevron up c="#a9bfdd" /></PaleArrow>
              <PaleArrow><Chevron c="#a9bfdd" /></PaleArrow>
            </PaleScroll>
          </ListBody>
        </Pane>

        <ReadingFrame>
          <Reading>
            <MailHead>
              <h3>MailChimp Custom Template Test</h3>
              <p>trans-741133-0-bitpublimedia=gmail.com@mcsv10.net on behalf of bitpublimedia@gmail.com</p>
              <ToLine><b>To:</b>testing@bitpublimedia.ro</ToLine>
            </MailHead>
            <MailBody>
              <MailCanvas>
                <MailColumn>
                  <TopLinks>
                    <div><Tight>Mobile version <a>here</a>.</Tight><br />To view hosted version click <a>here</a>.</div>
                    <div>Visit our website<br /><a className="site">www.YourWebsite.com</a></div>
                  </TopLinks>
                  <Brand>
                    <Logo />
                    <nav><a>Lementu</a> | <a>Donecos</a> | <a>Sagittis</a> | <a>Lorem &amp; Pellentes</a></nav>
                  </Brand>
                  <Card>
                    <Hero><Placeholder $w={540} $h={300} $lift={6}>540 x 300<br />placeholder</Placeholder></Hero>
                    <Feature>
                      <Placeholder $w={166} $h={220} $lift={1}>166 x 220<br />placeholder</Placeholder>
                      <Article>
                        <h4>Suspend ornare egestas tincidunt</h4>
                        <p>
                          Quisque nulla nibh, sagittis id ultrices sit amet, vulputate quis<br />
                          orci. Suspendisse vitae urna et <a>ante mattis vehicula</a> ultricies.<br />
                          Aliquam erat volutpat. Maecenas enim diam, tristique ac<br />
                          venenatis a, consequat non velit nibh libero sit amet ante.
                        </p>
                        <ul>{bullets.map(b => <li key={b}>{b}</li>)}</ul>
                      </Article>
                    </Feature>
                  </Card>
                </MailColumn>
              </MailCanvas>
              <Scroll>
                <ScrollArrow><Chevron up /></ScrollArrow>
                <Thumb />
                <ScrollArrow $end><Chevron /></ScrollArrow>
              </Scroll>
            </MailBody>
          </Reading>
        </ReadingFrame>
      </Workspace>

      <StatusBar><span>2 Items</span><i /><i /></StatusBar>
    </Window>
  );
}
